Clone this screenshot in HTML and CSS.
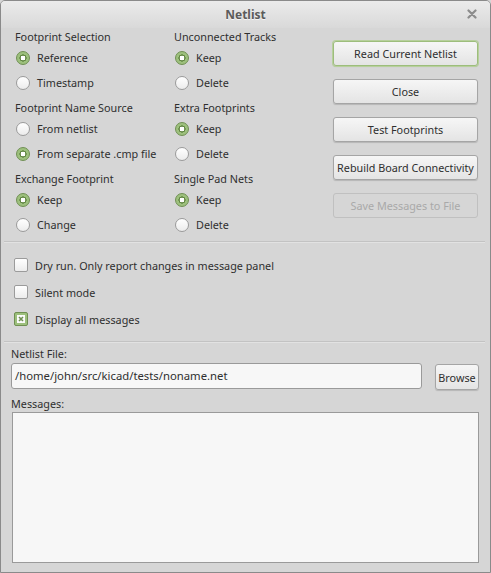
FILE: index.html
```html
<!DOCTYPE html>
<html>
<head>
<meta charset="utf-8">
<link rel="stylesheet" href="styles.css">
</head>
<body>
<div class="window">
  <div class="titlebar">
    <span class="title">Netlist</span>
    <span class="close">
      <svg width="10" height="10" viewBox="0 0 10 10"><path d="M1.5 1.5 L8.5 8.5 M8.5 1.5 L1.5 8.5" stroke="#8c8c8c" stroke-width="2.2" stroke-linecap="round"/></svg>
    </span>
  </div>
  <div class="content">
    <div class="top">
      <div class="groups">
        <div class="group">
          <div class="heading">Footprint Selection</div>
          <div class="opt"><span class="radio on"></span>Reference</div>
          <div class="opt"><span class="radio"></span>Timestamp</div>
        </div>
        <div class="group">
          <div class="heading">Unconnected Tracks</div>
          <div class="opt"><span class="radio on"></span>Keep</div>
          <div class="opt"><span class="radio"></span>Delete</div>
        </div>
        <div class="group">
          <div class="heading">Footprint Name Source</div>
          <div class="opt"><span class="radio"></span>From netlist</div>
          <div class="opt"><span class="radio on"></span>From separate .cmp file</div>
        </div>
        <div class="group">
          <div class="heading">Extra Footprints</div>
          <div class="opt"><span class="radio on"></span>Keep</div>
          <div class="opt"><span class="radio"></span>Delete</div>
        </div>
        <div class="group">
          <div class="heading">Exchange Footprint</div>
          <div class="opt"><span class="radio on"></span>Keep</div>
          <div class="opt"><span class="radio"></span>Change</div>
        </div>
        <div class="group">
          <div class="heading">Single Pad Nets</div>
          <div class="opt"><span class="radio on"></span>Keep</div>
          <div class="opt"><span class="radio"></span>Delete</div>
        </div>
      </div>
      <div class="buttons">
        <button class="btn focus">Read Current Netlist</button>
        <button class="btn">Close</button>
        <button class="btn">Test Footprints</button>
        <button class="btn">Rebuild Board Connectivity</button>
        <button class="btn disabled">Save Messages to File</button>
      </div>
    </div>
    <div class="sep"></div>
    <div class="checks">
      <div class="check"><span class="box"></span>Dry run. Only report changes in message panel</div>
      <div class="check"><span class="box"></span>Silent mode</div>
      <div class="check"><span class="box on"><svg width="8" height="8" viewBox="0 0 8 8"><rect x="0" y="0" width="8" height="8" fill="#fbfbfb"/><path d="M2 2 L6 6 M6 2 L2 6" stroke="#6f8f52" stroke-width="1.6"/></svg></span>Display all messages</div>
    </div>
    <div class="sep sep2"></div>
    <div class="file">
      <div class="label">Netlist File:</div>
      <div class="filerow">
        <div class="input">/home/john/src/kicad/tests/noname.net</div>
        <button class="btn browse">Browse</button>
      </div>
      <div class="label msg">Messages:</div>
      <div class="messages"></div>
    </div>
  </div>
</div>
</body>
</html>
```

FILE: styles.css
```css
* { box-sizing: border-box; }
html, body { margin: 0; padding: 0; background: #d6d6d6; }
body {
  font-family: "Noto Sans", "Open Sans", sans-serif;
  font-size: 10.8px;
  color: #2f2f2f;
}
.window {
  width: 491px;
  height: 573px;
  background: #d6d6d6;
  border: 1px solid #8a8a8a;
  border-radius: 5px 5px 0 0;
  overflow: hidden;
  display: flex;
  flex-direction: column;
}
.titlebar {
  height: 27px;
  flex: none;
  position: relative;
  display: flex;
  align-items: center;
  justify-content: center;
  background: linear-gradient(#ebebeb, #d9d9d9);
}
.title {
  font-weight: bold;
  font-size: 12px;
  color: #5b5b5b;
  text-shadow: 0 1px 0 #f4f4f4;
}
.close {
  position: absolute;
  right: 13px;
  top: 8px;
  width: 10px;
  height: 10px;
  display: flex;
}
.content {
  flex: 1;
  display: flex;
  flex-direction: column;
}
.top {
  display: flex;
  padding: 1px 12px 0 14px;
}
.groups {
  display: grid;
  grid-template-columns: 159px 159px;
  row-gap: 5px;
}
.group { display: flex; flex-direction: column; }
.heading {
  height: 16px;
  line-height: 16px;
}
.opt {
  height: 25px;
  display: flex;
  align-items: center;
  gap: 7px;
}
.radio {
  width: 14px;
  height: 14px;
  border-radius: 50%;
  border: 1px solid #9b9b9b;
  background: linear-gradient(#ffffff, #ececec);
  flex: none;
  margin-left: 1px;
}
.radio.on {
  border-color: #6f8f52;
  background: radial-gradient(circle, #ffffff 0 2.2px, #5f8440 2.6px 3.4px, #9dc07d 3.8px);
}
.buttons {
  margin-left: auto;
  width: 146px;
  display: flex;
  flex-direction: column;
  gap: 13px;
  padding-top: 12px;
}
.btn {
  font-family: inherit;
  font-size: 10.8px;
  color: #2f2f2f;
  height: 25px;
  padding: 0;
  border: 1px solid #a5a5a5;
  border-radius: 3px;
  background: linear-gradient(#f6f6f6, #e4e4e4);
  box-shadow: 0 1px 1px rgba(0,0,0,0.15);
  white-space: nowrap;
}
.btn.focus {
  border-color: #9dbd7c;
  box-shadow: 0 0 0 1px #b7d09c, 0 1px 1px rgba(0,0,0,0.15);
}
.btn.disabled {
  color: #a9a9a9;
  background: #d6d6d6;
  border-color: #c0c0c0;
  box-shadow: none;
}
.sep {
  height: 1px;
  background: #c3c3c3;
  margin: 4px 5px 0 3px;
  box-shadow: 0 1px 0 #e2e2e2;
}
.checks {
  display: flex;
  flex-direction: column;
  padding: 16px 0 0 13px;
  gap: 13px;
}
.check {
  height: 14px;
  display: flex;
  align-items: center;
  gap: 7px;
}
.box {
  width: 14px;
  height: 14px;
  border: 1px solid #9b9b9b;
  border-radius: 2px;
  background: linear-gradient(#ffffff, #ececec);
  display: flex;
  align-items: center;
  justify-content: center;
  flex: none;
}
.box.on {
  border-color: #6f8f52;
  background: #9dc07d;
}
.sep2 { margin-top: 15px; }
.file {
  display: flex;
  flex-direction: column;
  padding: 4px 11px 0 10px;
  flex: 1;
}
.label { height: 16px; line-height: 16px; }
.filerow {
  display: flex;
  justify-content: space-between;
  margin-top: 1px;
}
.input {
  width: 411px;
  height: 26px;
  border: 1px solid #9a9a9a;
  border-radius: 3px;
  background: #f7f7f7;
  padding-left: 3px;
  line-height: 24px;
  font-size: 11.3px;
}
.browse {
  width: 44px;
  height: 26px;
  margin-top: 1px;
}
.msg { margin-top: 6px; }
.messages {
  margin-top: 0;
  height: 151px;
  border: 1px solid #9a9a9a;
  background: #f7f7f7;
  margin-left: 1px;
}
```
